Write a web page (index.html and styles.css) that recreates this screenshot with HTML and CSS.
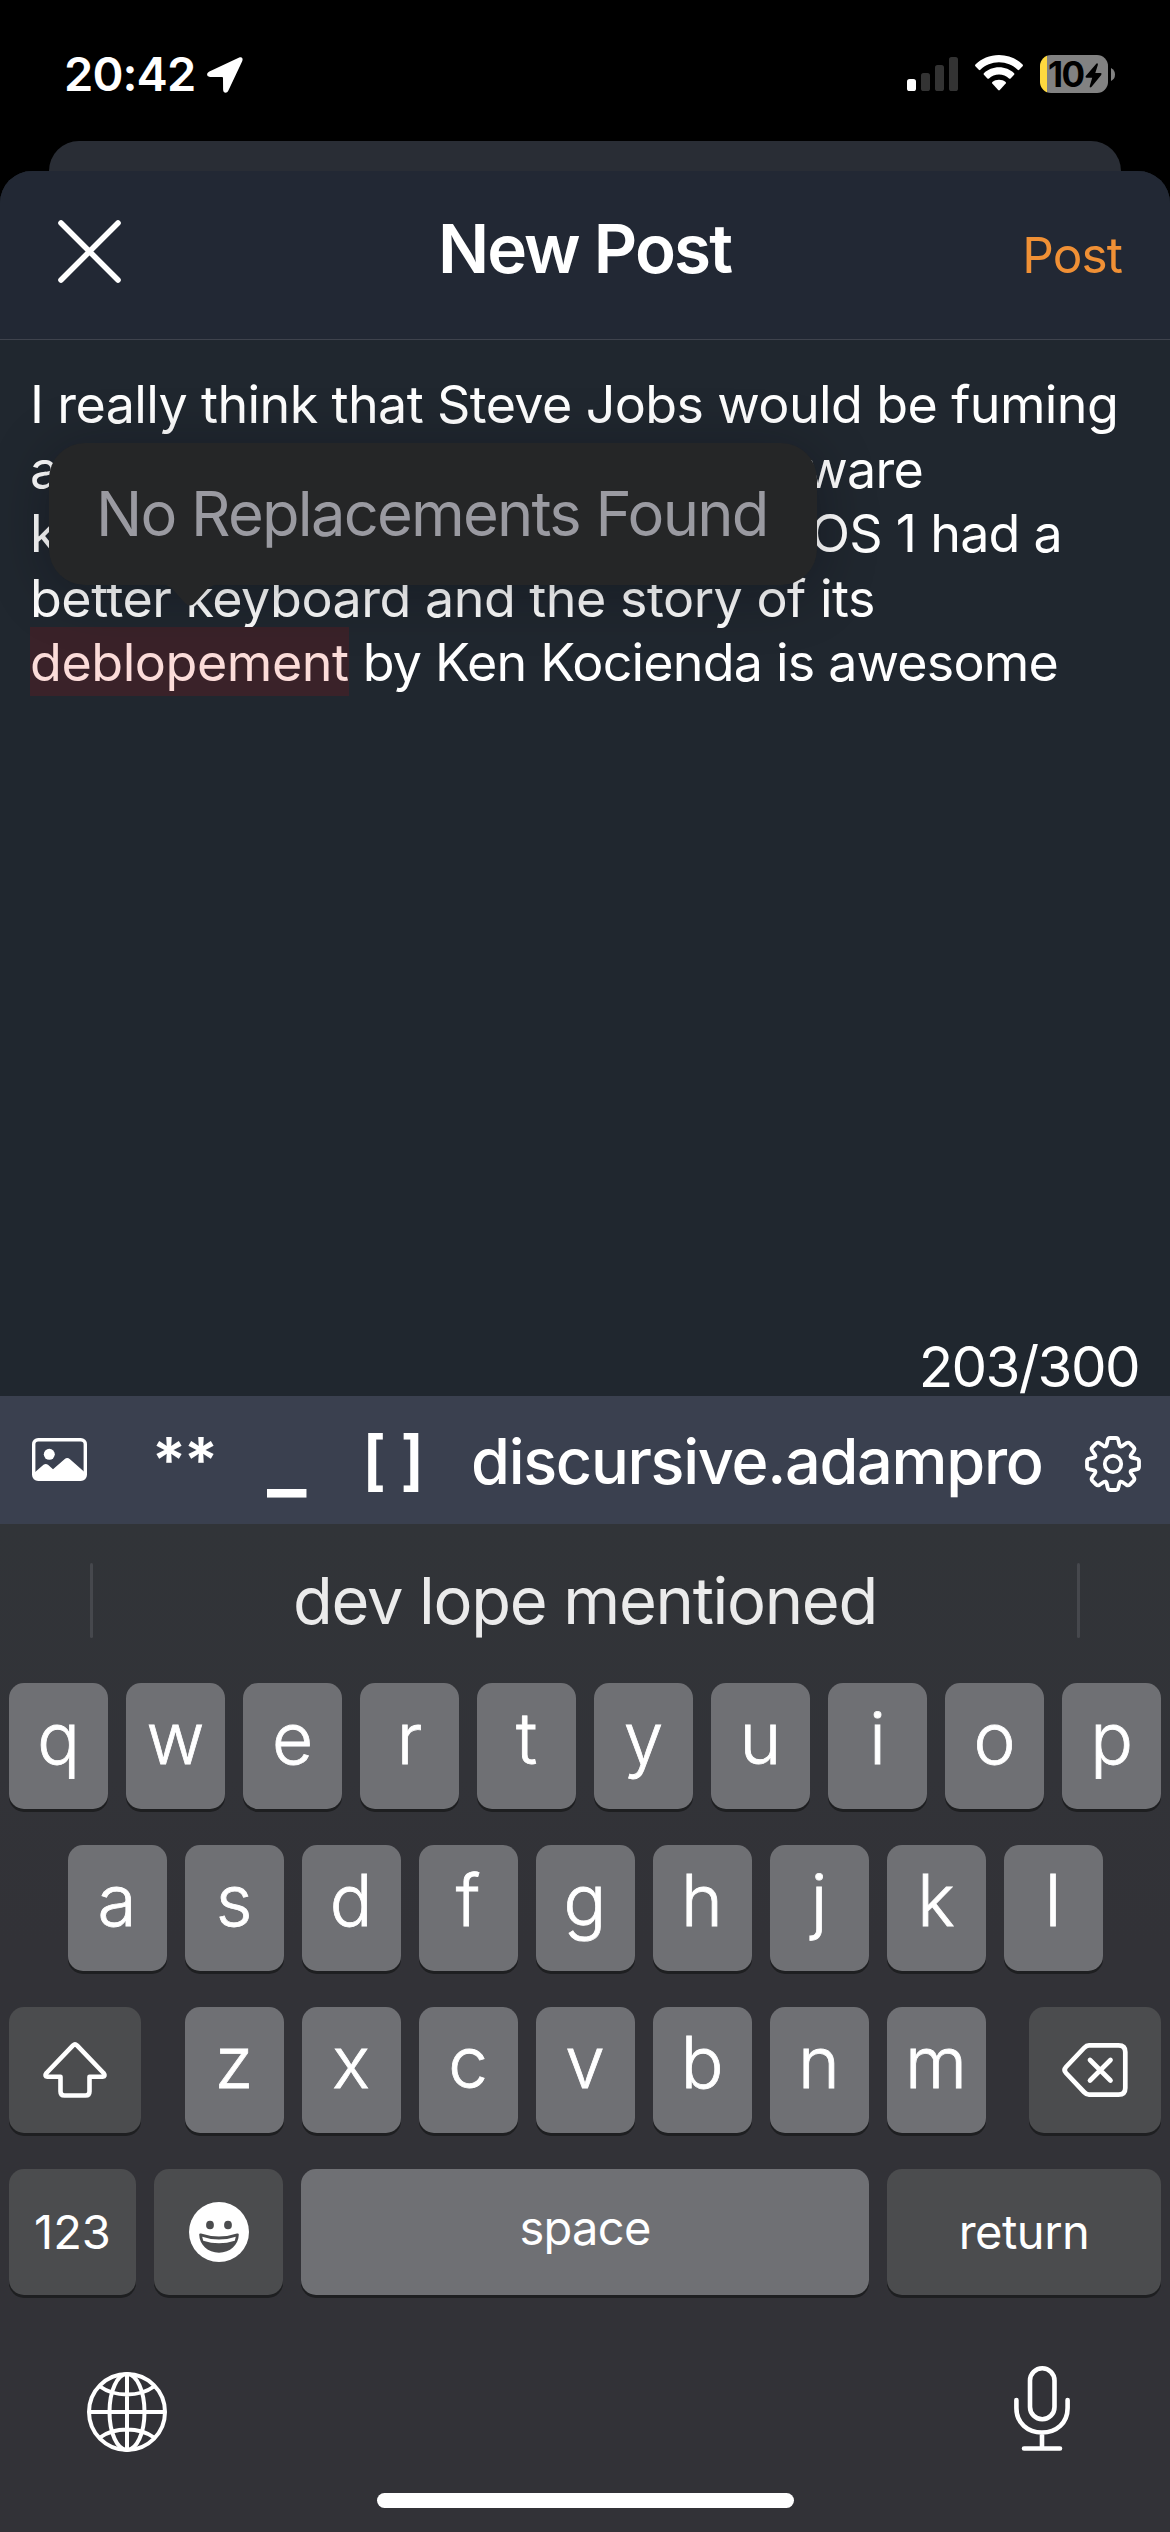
FILE: index.html
```html
<!DOCTYPE html>
<html lang="en">
<head>
<meta charset="utf-8">
<title>New Post</title>
<link rel="stylesheet" href="styles.css">
</head>
<body>
<div class="screen">
  <header class="status">
    <span class="time">20:42</span>
    <svg class="location" viewBox="0 0 36 36"><path d="M32.2 .5 2.4 14.6C-.9 16.2-.5 19.8 3 19.9L14.6 20C15.7 20 16 20.3 16 21.4L16.1 32.5C16.2 36.4 19.8 37 21.4 33.6L35.3 4C36.4 1.4 34.7-.6 32.2.5Z" fill="#fff"/></svg>
    <svg class="signal" viewBox="0 0 51 34"><rect y="22" width="9" height="12" rx="2.6" fill="#fff"/><g fill="#333"><rect x="14" y="16" width="9" height="18" rx="2.6"/><rect x="28" y="8" width="9" height="26" rx="2.6"/><rect x="42" width="9" height="34" rx="2.6"/></g></svg>
    <svg class="wifi" viewBox="0 0 48 36"><g fill="#fff"><path d="M24 0C14.800 0 6.300 3.500.400 9.600Q-.3 10.400.4 11.200L3.800 14.800Q4.600 15.500 5.400 14.700C10.200 10 16.800 7.200 24 7.200S37.800 10 42.600 14.700Q43.400 15.500 44.200 14.800L47.600 11.200Q48.300 10.400 47.600 9.600C41.700 3.500 33.200 0 24 0Z"/><path d="M24 12.300C18.200 12.300 12.800 14.500 8.900 18.200Q8.100 19 8.900 19.800L12.400 23.500Q13.200 24.200 14 23.500C16.700 21.100 20.200 19.600 24 19.600S31.300 21.100 34 23.500Q34.800 24.200 35.600 23.500L39.100 19.800Q39.900 19 39.100 18.200C35.200 14.500 29.800 12.300 24 12.300Z"/><path d="M24 24.700C21.400 24.700 19.200 25.600 17.400 27Q16.600 27.800 17.300 28.600L23.200 35Q24 35.800 24.800 35L30.700 28.600Q31.400 27.800 30.600 27C28.800 25.600 26.600 24.700 24 24.700Z"/></g></svg>
    <div class="battery"><span class="level">10</span><svg class="bolt" viewBox="0 0 17 25"><path d="M11.500.4 1 12.800Q-.2 14.500 1.600 14.700L7.200 14.700 4.700 23.200Q4.600 25.300 6.400 24L16.200 12Q17.300 10.300 15.500 10.100L10.300 10.100 12.900 1.700Q13 -.5 11.500.4Z"/></svg></div>
    <svg class="nub" viewBox="0 0 4 13"><path d="M0 0Q4 2 4 6.500T0 13Z" fill="#828282"/></svg>
  </header>

  <div class="sheet-behind"></div>

  <main class="sheet">
    <div class="titlebar">
      <svg class="close" viewBox="0 0 63 63"><path d="M3 3 60 60M60 3 3 60" stroke="#fff" stroke-width="5.600" stroke-linecap="round"/></svg>
      <h1>New Post</h1>
      <span class="post">Post</span>
    </div>

    <div class="editor">
      <p class="line l1">I really think that Steve Jobs would be fuming</p>
      <p class="line l2"><span>a</span><span>ware</span></p>
      <p class="line l3"><span>k</span><span>OS 1 had a</span></p>
      <p class="line l4">better keyboard and the story of its</p>
      <p class="line l5"><mark>deblopement</mark> by Ken Kocienda is awesome</p>
      <div class="popup">No Replacements Found<svg class="tail" viewBox="0 0 64 22"><path d="M0 0C10 0 14 4 18 9L27 19Q32 24 37 19L46 9C50 4 54 0 64 0Z" fill="#252627"/></svg></div>
      <div class="counter">203/300</div>
    </div>
  </main>

  <div class="toolbar">
    <svg class="image" viewBox="0 0 55 43"><rect x="1.700" y="1.700" width="51.600" height="39.600" rx="4.500" fill="none" stroke="#fff" stroke-width="3.400"/><circle cx="17.300" cy="16.300" r="5.500" fill="#fff"/><path d="M2 35 11.500 26.800Q13.800 25 16 26.800L21 31.300 32.500 21.200Q35.200 19 38 21.200L53 34.500V38Q53 42 49 42H6Q2 42 2 38Z" fill="#fff"/></svg>
    <span class="tool stars">**</span>
    <span class="tool under">_</span>
    <span class="tool brackets">[ ]</span>
    <span class="host">discursive.adampro</span>
    <svg class="gear" viewBox="0 0 56 56"><g fill="none" stroke="#fff" stroke-width="3.800" stroke-linejoin="round"><path d="M22.600 4.500Q23 2 25 2H31Q33 2 33.400 4.500L34.400 9Q35 11.300 37.200 10.100L41.300 7.200Q43.300 5.900 44.900 7.400L48.600 11.100Q50.100 12.700 48.800 14.700L46 18.800Q44.700 21 47 21.600L51.500 22.600Q54 23 54 25V31Q54 33 51.500 33.400L47 34.400Q44.700 35 46 37.200L48.800 41.300Q50.100 43.300 48.600 44.900L44.900 48.600Q43.300 50.100 41.300 48.800L37.200 46Q35 44.700 34.400 47L33.400 51.500Q33 54 31 54H25Q23 54 22.600 51.500L21.600 47Q21 44.700 18.800 46L14.700 48.800Q12.700 50.100 11.100 48.600L7.400 44.900Q5.900 43.300 7.200 41.300L10 37.200Q11.300 35 9 34.400L4.500 33.400Q2 33 2 31V25Q2 23 4.500 22.600L9 21.600Q11.300 21 10 18.800L7.200 14.700Q5.900 12.700 7.400 11.100L11.100 7.400Q12.700 5.900 14.700 7.200L18.800 10Q21 11.300 21.600 9Z"/><circle cx="28" cy="28" r="8.200"/></g></svg>
  </div>

  <section class="keyboard">
    <div class="suggest"><i></i><span>dev lope mentioned</span><i></i></div>
    <div class="row"><b>q</b><b>w</b><b>e</b><b>r</b><b>t</b><b>y</b><b>u</b><b>i</b><b>o</b><b>p</b></div>
    <div class="row"><b>a</b><b>s</b><b>d</b><b>f</b><b>g</b><b>h</b><b>j</b><b>k</b><b>l</b></div>
    <div class="row spread">
      <div class="fn side"><svg class="shift" viewBox="0 0 64 56"><path d="M30 3.400Q32 1.600 34 3.400L60.500 31Q63 34.300 59.500 34.800H46.500V49.500Q46.500 53.500 42.500 53.500H21.500Q17.500 53.500 17.500 49.500V34.800H4.500Q1 34.300 3.500 31Z" fill="none" stroke="#fff" stroke-width="4.600" stroke-linejoin="round"/></svg></div>
      <div class="letters"><b>z</b><b>x</b><b>c</b><b>v</b><b>b</b><b>n</b><b>m</b></div>
      <div class="fn side"><svg class="delete" viewBox="0 0 66 54"><path d="M27 2.400H56.500Q63.300 2.400 63.300 9V45Q63.300 51.600 56.500 51.600H27Q24.500 51.600 22 49L4 30Q1.200 27 4 24L22 5Q24.500 2.400 27 2.400ZM28 17 48.500 37.500M48.500 17 28 37.500" fill="none" stroke="#fff" stroke-width="4.700" stroke-linecap="round" stroke-linejoin="round"/></svg></div>
    </div>
    <div class="row bottom">
      <div class="fn num">123</div>
      <div class="fn emoji"><svg viewBox="0 0 60 60"><circle cx="30" cy="30" r="30" fill="#fff"/><g fill="#4b4c4e"><ellipse cx="21" cy="23" rx="3.900" ry="4.300"/><ellipse cx="39" cy="23" rx="3.900" ry="4.300"/><path d="M10.200 32.500Q10.300 31 12 31.500 30 37.500 48 31.500 49.700 31 49.800 32.500C49.600 43 41 50.700 30 50.700S10.400 43 10.200 32.500Z"/></g><path d="M13.200 34.700Q30 40.500 46.800 34.700L45.800 38.700Q30 43.800 14.200 38.700Z" fill="#fff"/></svg></div>
      <div class="space">space</div>
      <div class="fn return">return</div>
    </div>
    <div class="dock">
      <svg class="globe" viewBox="0 0 80 80"><g fill="none" stroke="#fff" stroke-width="4"><circle cx="40" cy="40" r="38"/><ellipse cx="40" cy="40" rx="17.500" ry="38"/><path d="M40 2V78M2 40H78M13 14.500Q24 22.500 40 22.500T67 14.500M13 65.500Q24 57.500 40 57.500T67 65.500"/></g></svg>
      <svg class="mic" viewBox="0 0 56 85"><g fill="none" stroke="#fff" stroke-width="4.600" stroke-linecap="round"><rect x="16" y="2.300" width="24.500" height="51" rx="12.250"/><path d="M2.400 34V42C2.400 57 13.500 66.500 28 66.500S53.600 57 53.600 42V34M28 67V82M10 82.500H46"/></g></svg>
    </div>
    <div class="home"></div>
  </section>
</div>
</body>
</html>
```
FILE: styles.css
```css
* { box-sizing: border-box; margin: 0; padding: 0; }
body { background: #000; font-family: Inter, "Liberation Sans", sans-serif; color: #fff; }
svg { display: block; flex: none; overflow: visible; }
.screen { width: 1170px; height: 2532px; overflow: hidden; display: flex; flex-direction: column; background: #000; white-space: nowrap; }

.status { height: 141px; flex: none; display: flex; align-items: flex-start; padding-left: 64px; }
.time { font-size: 47px; font-weight: 600; line-height: 148px; width: 143px; letter-spacing: -0.9px; }
.location { width: 36px; height: 36px; margin-top: 57px; }
.signal { width: 51px; height: 34px; margin: 57px 0 0 664px; }
.wifi { width: 48px; height: 36px; margin: 55px 0 0 17px; }
.battery { width: 68px; height: 38px; margin: 55px 0 0 17px; padding-left: 8px; border-radius: 11px; background: linear-gradient(90deg, #ffd93f 7px, #828282 7px); color: #000; display: flex; }
.level { font-size: 35px; font-weight: 700; line-height: 38px; width: 37px; letter-spacing: -1.5px; }
.bolt { width: 17px; height: 25px; margin-top: 8px; }
.nub { width: 4px; height: 13px; margin: 68px 0 0 3px; }

.sheet-behind { height: 60px; flex: none; margin: 0 49px -30px; border-radius: 30px 30px 0 0; background: #292d35; }
.sheet { height: 1225px; flex: none; position: relative; border-radius: 32px 32px 0 0; background: #20272f; }
.titlebar { height: 169px; display: grid; grid-template-columns: 1fr auto 1fr; align-items: start; background: #222834; border-radius: 32px 32px 0 0; border-bottom: 1px solid #3f434d; padding: 0 48px 0 58px; }
.close { width: 63px; height: 63px; margin-top: 49px; }
h1 { font-size: 67.400px; font-weight: 600; line-height: 155px; letter-spacing: -1.9px; margin-right: 11px; }
.post { font-size: 49.500px; line-height: 168px; letter-spacing: -0.9px; color: #f09035; justify-self: end; }

.editor { position: relative; height: 1056px; padding: 33px 0 0 30px; font-size: 52px; letter-spacing: -0.75px; }
.line { height: 64.500px; line-height: 64.500px; display: flex; white-space: pre; }
.l1 { letter-spacing: -0.62px; }
.l2, .l3 { justify-content: space-between; }
.l2 { width: 893px; }
.l3 { width: 1032px; }
.l4 { letter-spacing: -0.5px; }
.l5 { letter-spacing: -0.82px; }
mark { background: #3a2229; color: #fbdcd9; line-height: 60px; width: 319px; height: 69px; padding-top: 6px; margin-top: -4px; letter-spacing: -0.45px; }
.popup { position: absolute; left: 49px; top: 103px; width: 768px; height: 142px; border-radius: 36px; background: #252627; color: #9a9aa1; font-size: 61.400px; line-height: 142px; padding-left: 47px; letter-spacing: -1.75px; box-shadow: 0 8px 60px rgba(0,5,12,.3); }
.tail { position: absolute; left: 109px; top: 141px; width: 64px; height: 22px; }
.counter { position: absolute; right: 31px; bottom: -5px; z-index: 2; font-size: 56.500px; line-height: 68px; letter-spacing: -1.6px; }

.toolbar { height: 128px; flex: none; background: #3a404f; display: flex; align-items: flex-start; padding-left: 32px; }
.image { width: 55px; height: 43px; margin-top: 42px; }
.tool { font-size: 63px; font-weight: 600; line-height: 128px; }
.stars { margin-left: 65px; width: 115px; letter-spacing: -2px; }
.under { width: 95px; font-size: 84px; line-height: 126px; }
.brackets { width: 109px; font-size: 65px; letter-spacing: -1.2px; }
.host { font-size: 63px; font-weight: 500; line-height: 130px; width: 570px; overflow: hidden; letter-spacing: -1.3px; }
.gear { width: 56px; height: 56px; margin: 40px 0 0 44px; }

.keyboard { flex: 1; background: linear-gradient(#313438, #323338 250px, #323237 420px); }
.suggest { height: 159px; display: flex; justify-content: space-between; padding: 0 90px; }
.suggest i { width: 3px; height: 75px; margin-top: 39px; background: #46484d; border-radius: 2px; }
.suggest span { font-size: 65px; line-height: 154px; letter-spacing: -1.3px; color: #ebebeb; }
.row { height: 126px; margin-bottom: 36px; display: flex; justify-content: center; gap: 18px; }
.spread { justify-content: space-between; padding: 0 9px; }
.letters { display: flex; gap: 18px; }
b { width: 99px; height: 126px; font-size: 71px; font-weight: 300; -webkit-text-stroke: 0.8px #fff; line-height: 110px; text-align: center; }
b, .fn, .space { border-radius: 15px; background: #6f7074; box-shadow: 0 3px 0 #1e1f21; }
.fn { background: #4b4c4e; display: flex; align-items: center; justify-content: center; }
.fn, .space { height: 126px; font-size: 47px; line-height: 126px; text-align: center; }
.side { width: 132px; }
.shift { width: 64px; height: 56px; }
.delete { width: 66px; height: 54px; }
.bottom { margin-bottom: 0; }
.num { width: 127px; }
.emoji { width: 129px; }
.emoji svg { width: 60px; height: 60px; }
.space { width: 568px; line-height: 118px; letter-spacing: -0.7px; }
.return { width: 274px; letter-spacing: -0.5px; }
.dock { height: 198px; display: flex; justify-content: space-between; padding: 0 100px 0 87px; }
.globe { width: 80px; height: 80px; margin-top: 77px; }
.mic { width: 56px; height: 85px; margin-top: 71px; }
.home { width: 417px; height: 15px; border-radius: 8px; background: #fff; margin: 0 auto; }
```
